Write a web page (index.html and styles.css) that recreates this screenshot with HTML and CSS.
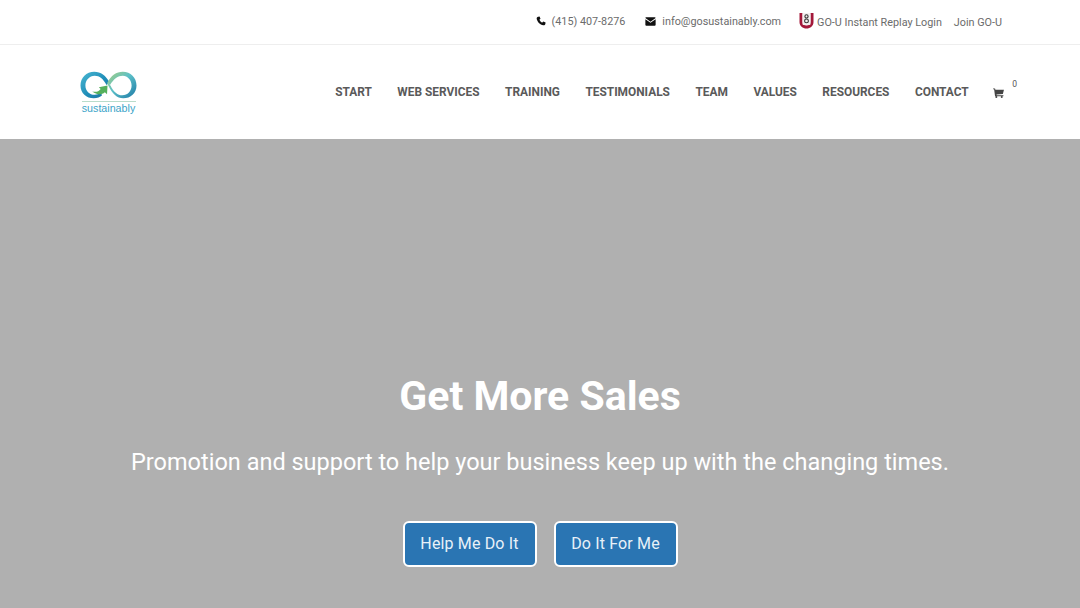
FILE: index.html
```html
<!DOCTYPE html>
<html lang="en">
<head>
<meta charset="utf-8">
<title>Go Sustainably</title>
<link rel="stylesheet" href="styles.css">
</head>
<body>
<div class="topbar">
  <div class="top-item contact-first"><svg class="ico" viewBox="0 0 12 12"><path fill="#111" d="M2.600 .8 4.300 .5 5.400 3.200 4.100 4.400C4.700 5.800 6 7.200 7.600 7.900L8.800 6.600 11.500 7.700 11.200 9.600C11 10.700 10 11.400 8.800 11.200 4.800 10.500 1.300 6.900.8 3 .7 2 1.400 1 2.600 .8Z"/></svg><span>(415) 407-8276</span></div>
  <div class="top-item contact-mail"><svg class="ico mail" viewBox="0 0 12 10"><path fill="#111" d="M.3 1.200C.3.600.8.200 1.300.2h9.400c.6 0 1 .4 1 1l-5.700 4zM.3 2.600 6 6.500l5.700-3.900v6c0 .6-.4 1-1 1H1.300c-.6 0-1-.4-1-1z"/></svg><span>info@gosustainably.com</span></div>
  <div class="top-item login"><svg class="shield" viewBox="0 0 15 16"><path fill="#a3183a" d="M.5 0H3.500v9c0 2.500 1.700 3.500 4 3.500s4-1 4-3.500V0h3v9c0 4-3.200 6.500-7 6.500S.5 13 .5 9Z"/><rect x="3.500" y="0" width="8" height="12" rx="1" fill="#f4f0f0"/><circle cx="7.500" cy="3.400" r="1.600" fill="none" stroke="#333" stroke-width="1.100"/><circle cx="7.500" cy="7.900" r="1.900" fill="none" stroke="#333" stroke-width="1.100"/></svg><span>GO-U Instant Replay Login</span></div>
  <div class="top-item join"><span>Join GO-U</span></div>
</div>
<header class="mainbar">
  <a class="logo" href="#">
    <svg class="logo-mark" viewBox="0 0 58 29">
      <defs>
        <linearGradient id="lg1" x1="0" y1="0" x2="1" y2="1"><stop offset="0" stop-color="#4bb8d2"/><stop offset=".55" stop-color="#1f8db8"/><stop offset="1" stop-color="#1b6f9c"/></linearGradient>
        <linearGradient id="lg2" x1="0" y1="0" x2="1" y2="1"><stop offset="0" stop-color="#a9cf7c"/><stop offset=".45" stop-color="#5cc0c8"/><stop offset="1" stop-color="#1c78a6"/></linearGradient>
      </defs>
      <path fill="url(#lg1)" d="M30 11.500C26.500 4.500 21 .5 14.500.5 6.500.5.500 6.500.500 14.500S6.500 27.500 14 27.500c3.500 0 6.500-1 8.500-3l-1.500-2.500c-1.800 1.300-3.800 2-6 2C9.500 24 5.500 20 5.500 14.500S9.500 4.500 15 4.500c5 0 8.500 3 12 9.500Z"/>
      <path fill="url(#lg2)" d="M28 11.500C31.500 4.500 37 .5 43.500.5c8 0 14 6 14 14s-6 13-13.500 13c-6.500 0-11-4.500-15-12.500-3-6-1-3.500 2-.5 3 6.500 7.500 10 12 10 5.500 0 9.500-4.500 9.500-10S48.500 4.500 43.500 4.500c-5 0-9 3-13 9.500Z"/>
      <path fill="#55b05c" d="M12.500 20.500c3.500 1 6.500.3 8.500-2.500l-1.800-1.800 8.800-1.700-.5 9-2.200-2.200c-3.500 3-8.300 2.700-12.800-.8Z"/>
    </svg>
    <span class="logo-rule"></span>
    <span class="logo-text">sustainably</span>
  </a>
  <nav class="nav">
    <a href="#">START</a>
    <a href="#">WEB SERVICES</a>
    <a href="#">TRAINING</a>
    <a href="#">TESTIMONIALS</a>
    <a href="#">TEAM</a>
    <a href="#">VALUES</a>
    <a href="#">RESOURCES</a>
    <a href="#">CONTACT</a>
    <a href="#" class="cart"><svg class="cart-ico" viewBox="0 0 12 11"><path fill="#444" d="M0 .5h2.200l.4 1.300H12l-1.200 4.700-7 .6.200.9h7.400v1H2.200L1.200 1.500H0Z"/><circle cx="3.600" cy="9.800" r="1.100" fill="#444"/><circle cx="9.600" cy="9.800" r="1.100" fill="#444"/></svg><sup class="cart-count">0</sup></a>
  </nav>
</header>
<main class="hero">
  <h1>Get More Sales</h1>
  <p>Promotion and support to help your business keep up with the changing times.</p>
  <div class="actions">
    <a class="btn btn-a" href="#">Help Me Do It</a>
    <a class="btn btn-b" href="#">Do It For Me</a>
  </div>
</main>
</body>
</html>
```
FILE: styles.css
```css
* { box-sizing: border-box; }
html, body { margin: 0; padding: 0; }
body {
  width: 1080px;
  height: 608px;
  overflow: hidden;
  background: #fff;
  font-family: Roboto, "Liberation Sans", sans-serif;
}
a { text-decoration: none; color: inherit; }

.topbar {
  height: 45px;
  border-bottom: 1px solid #eeeeee;
  display: flex;
  justify-content: flex-end;
  align-items: center;
  padding-right: 78px;
  font-size: 10.800px;
  color: #6b6b6b;
}
.top-item { display: flex; align-items: center; white-space: nowrap; }
.contact-first { margin-right: 20px; margin-top: -2px; }
.contact-mail { margin-right: 18px; margin-top: -2px; }
.login { margin-right: 12px; }
.ico { width: 10px; height: 10px; margin-right: 6px; }
.mail { width: 11px; height: 9px; margin-right: 6px; }
.shield { width: 15px; height: 16px; margin-right: 3px; margin-top: -3px; }

.mainbar {
  height: 94px;
  display: flex;
  align-items: center;
  justify-content: space-between;
  padding: 0 63px 0 80px;
}
.logo { display: flex; flex-direction: column; align-items: center; width: 57px; margin-top: 2px; }
.logo-mark { width: 57px; height: 29px; display: block; }
.logo-rule { width: 54px; height: 1px; background: #b9dccb; margin-top: 1px; }
.logo-text { font-family: "Liberation Sans", Arial, sans-serif; font-size: 10.700px; line-height: 13px; color: #3ba3c8; white-space: nowrap; }

.nav {
  display: flex;
  align-items: center;
  gap: 25.500px;
  font-size: 11.900px;
  font-weight: 700;
  color: #5a5a5a;
  white-space: nowrap;
  margin-top: -1px;
}
.cart { display: flex; align-items: flex-start; margin-left: -1px; }
.cart-ico { width: 11px; height: 10px; margin-top: 3px; }
.cart-count { font-size: 8.500px; line-height: 10px; margin: -6px 0 0 8px; font-weight: 400; color: #555; }

.hero {
  height: 469px;
  background: #b0b0b0;
  display: flex;
  flex-direction: column;
  align-items: center;
  color: #fff;
}
.hero h1 {
  margin: 232px 0 0;
  font-size: 41px;
  line-height: 50px;
  font-weight: 700;
}
.hero p {
  margin: 26px 0 0;
  font-size: 23.500px;
  line-height: 30px;
  font-weight: 400;
}
.actions { display: flex; gap: 17px; margin-top: 44px; }
.btn {
  height: 46px;
  border: 2px solid #fff;
  border-radius: 6px;
  background: #2a75b3;
  color: #e8f1f8;
  font-size: 16px;
  line-height: 42px;
  letter-spacing: .15px;
  text-align: center;
}
.btn-a { width: 134px; }
.btn-b { width: 124px; }
```
